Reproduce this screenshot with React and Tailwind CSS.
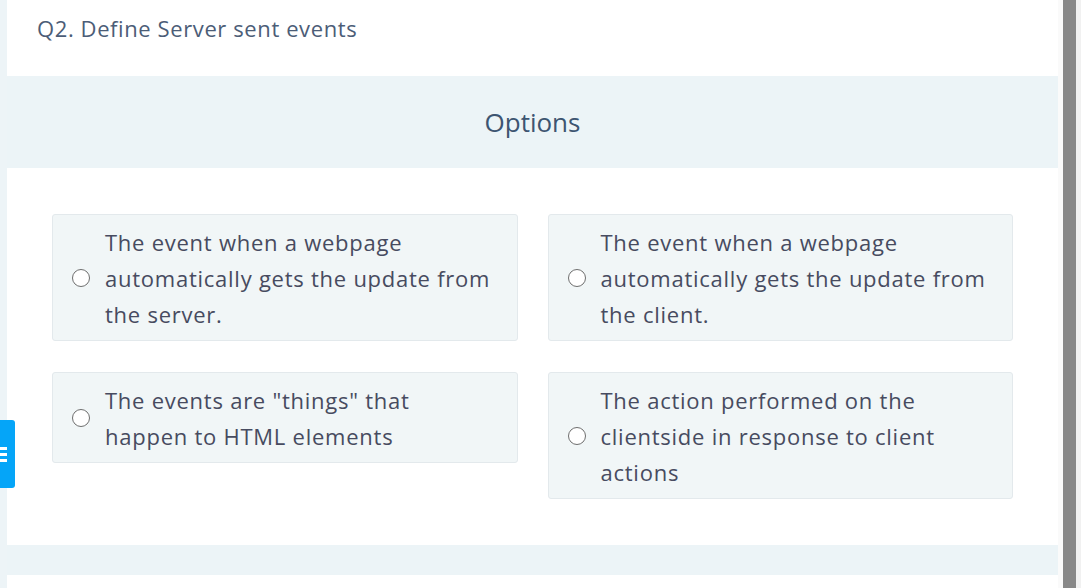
import React from "react";

const options = [
  ["The event when a webpage", "automatically gets the update from", "the server."],
  ["The event when a webpage", "automatically gets the update from", "the client."],
  ['The events are "things" that', "happen to HTML elements"],
  ["The action performed on the", "clientside in response to client", "actions"],
];

function Option({ lines }) {
  return (
    <label className="flex items-center rounded-[3px] border border-[#e3e9ec] bg-[#f1f6f7] pl-[19px] pr-4 pt-[9px] pb-[8px]">
      <span className="h-[18px] w-[18px] shrink-0 rounded-full border-[1.5px] border-[#6e6e6e] bg-white" />
      <span className="ml-[15px] text-[22px] leading-[36px] tracking-[0.75px] text-[#474b60]">
        {lines.map((l, i) => (
          <span key={i} className="block whitespace-nowrap">
            {l}
          </span>
        ))}
      </span>
    </label>
  );
}

export default function App() {
  return (
    <div className="relative flex h-[588px] overflow-hidden bg-[#edf4f7] font-['Open_Sans',sans-serif]">
      <div className="ml-[7px] flex w-[1051px] flex-col">
        <div className="h-[76px] bg-white pl-[30px] pt-[13px] text-[22px] leading-[30px] tracking-[0.6px] text-[#4c5d77]">
          Q2. Define Server sent events
        </div>
        <div className="flex h-[92px] items-center justify-center bg-[#ecf4f7] text-[26px] text-[#3d5571]">
          Options
        </div>
        <div className="grid grid-cols-2 items-start gap-x-[30px] gap-y-[31px] bg-white px-[45px] pt-[46px] pb-[46px]">
          {options.map((o, i) => (
            <Option key={i} lines={o} />
          ))}
        </div>
        <div className="h-[30px] bg-[#ecf4f7]" />
        <div className="flex-1 bg-white" />
      </div>
      <div className="w-[5px] bg-[#fafafa]" />
      <div className="w-[13px] bg-[#888888]" />
      <div className="w-[5px] bg-[#f1f1f1]" />
      <button className="absolute left-0 top-[420px] flex h-[68px] w-[15px] flex-col items-start justify-center gap-[3px] rounded-r-[3px] bg-[#05a5f8]">
        <span className="h-[3px] w-[7px] bg-white" />
        <span className="h-[3px] w-[7px] bg-white" />
        <span className="h-[3px] w-[7px] bg-white" />
      </button>
    </div>
  );
}
